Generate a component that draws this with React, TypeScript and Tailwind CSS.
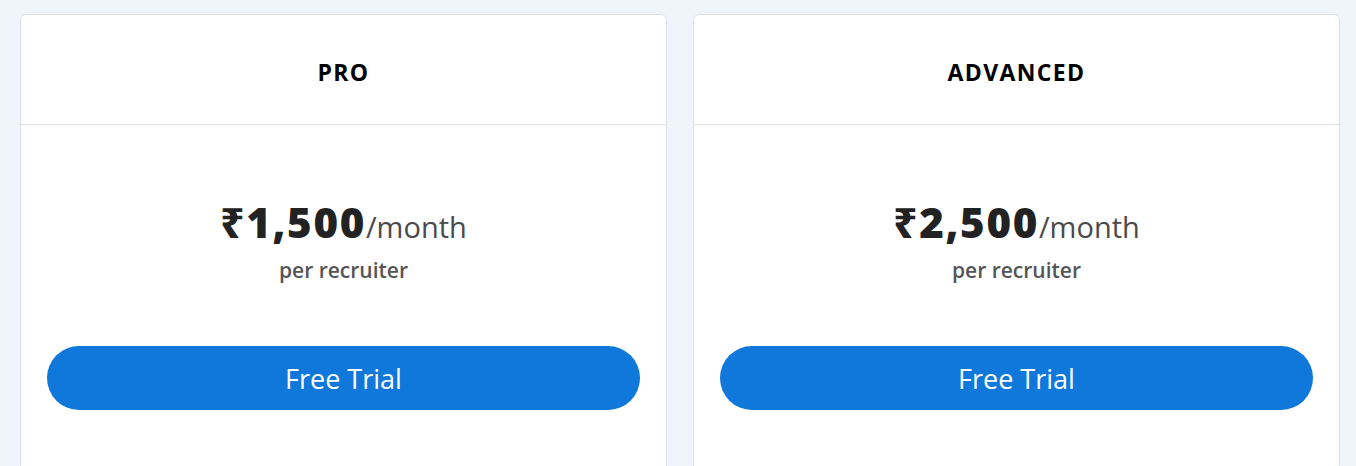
import React from 'react';

const PLANS = [
  { name: 'PRO', price: '₹1,500' },
  { name: 'ADVANCED', price: '₹2,500' },
];

function PlanCard({ name, price }: { name: string; price: string }) {
  return (
    <div className="flex-1 bg-white border border-[#dde1e6] rounded-[6px] flex flex-col">
      <div className="h-[110px] pt-[6px] flex items-center justify-center border-b border-[#dde1e6]">
        <h3 className="text-[23px] font-bold text-black tracking-[0.06em]">{name}</h3>
      </div>
      <div className="px-[26px] pt-[76px] pb-[60px] flex flex-col items-center">
        <div className="flex items-baseline text-[#222]">
          <span className="text-[42px] font-extrabold leading-none tracking-[0.04em]">{price}</span>
          <span className="text-[29px] text-[#4a4a4a] leading-none">/month</span>
        </div>
        <p className="mt-[17px] text-[21px] font-semibold text-[#555] leading-none">per recruiter</p>
        <button className="mt-[65px] w-full h-[64px] rounded-full bg-[#1178db] text-white text-[27px] leading-none">
          Free Trial
        </button>
      </div>
    </div>
  );
}

export default function App() {
  return (
    <div className="min-h-[466px] bg-[#f0f5fc] pl-[20px] pr-[16px] pt-[14px] overflow-hidden" style={{ fontFamily: "'Open Sans', 'Noto Sans', sans-serif" }}>
      <div className="flex gap-[26px]">
        {PLANS.map(p => <PlanCard key={p.name} {...p} />)}
      </div>
    </div>
  );
}
